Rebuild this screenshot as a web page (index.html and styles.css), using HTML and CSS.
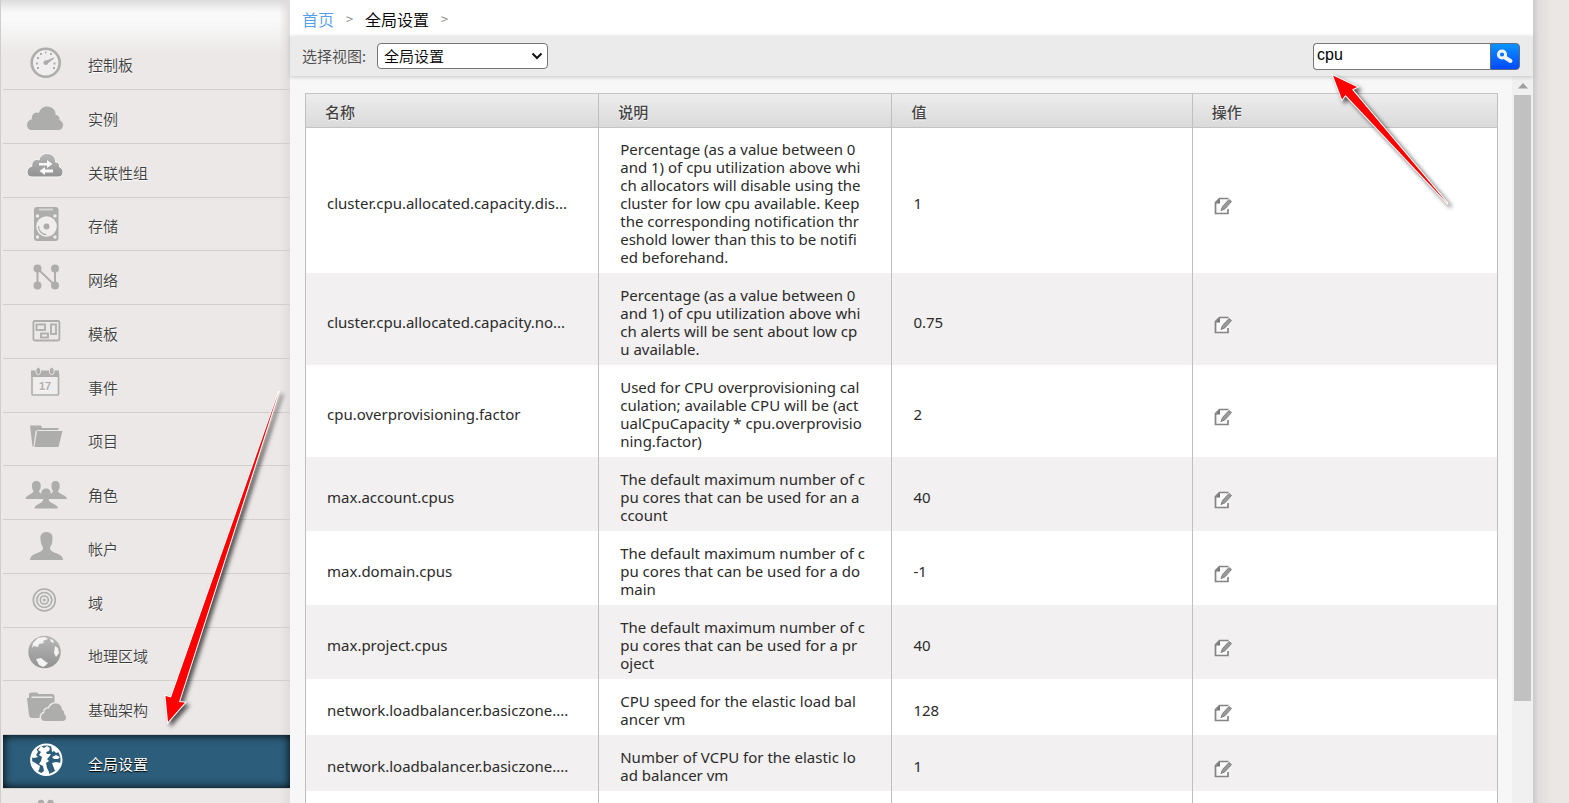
FILE: index.html
```html
<!DOCTYPE html>
<html lang="zh-CN">
<head>
<meta charset="utf-8">
<title>全局设置</title>
<link rel="stylesheet" href="styles.css">
</head>
<body>
<div class="app">
  <nav class="sidebar" aria-label="导航">
    <svg class="defs" width="0" height="0" aria-hidden="true">
      <defs>
        <linearGradient id="fade" x1="0" y1="0" x2="0" y2="1"><stop offset="0" stop-color="#b8b8b8"/><stop offset="1" stop-color="#929292"/></linearGradient>
        <path id="cloud" d="M7 40C4 40 2 38 2 35C2 32 4 30 7 29C6 25 10 21 14 23C15 19 18 16.500 22 16.500C27 16.500 31 20 30.500 25C33 25 35 27 34.500 30C37 31 38 33 38 35C38 38 36 40 33 40Z"/>
        <path id="person" d="M21.500 12C26 12 28 15 27.500 19C27.500 23 26 26 25 27.500C25 31 28 32 32 33.500C36 35 38 37 38 40H5C5 37 7 35 11 33.500C15 32 18 31 18 27.500C17 26 15.500 23 15.500 19C15 15 17 12 21.500 12Z"/>
      </defs>
    </svg>
    <ul class="menu">
      <li><a href="#"><svg class="icon" viewBox="0 0 44 53"><circle cx="20.700" cy="26.700" r="14" fill="#f0eeee" stroke="#adadac" stroke-width="2.600"/><path d="M11 27.500h2M12 22h2M15 18h2M20 16.500h1.500M25 18h2M28.500 27.500h2M12 32h2M28 32h2" fill="none" stroke="#adadac" stroke-width="2"/><circle cx="20.700" cy="26.700" r="2.300"/><path d="M20 25.500L29 22L21.500 28Z" stroke="#adadac"/></svg><span>控制板</span></a></li>
      <li><a href="#"><svg class="icon" viewBox="0 0 44 53"><use href="#cloud"/></svg><span>实例</span></a></li>
      <li><a href="#"><svg class="icon" viewBox="0 0 44 53"><g transform="translate(0 -7)"><use href="#cloud" fill="url(#fade)" stroke="#f8f8f8"/></g><path d="M14 19H22V16L27.500 20L22 24V21.500H14ZM28 25.500H20V23L14.500 27L20 31V28.500H28Z" fill="#fafafa"/></svg><span>关联性组</span></a></li>
      <li><a href="#"><svg class="icon" viewBox="0 0 44 53"><rect x="9" y="9" width="24.500" height="34" rx="3"/><path d="M14 11.500H28" stroke="#d6d5d4" stroke-width="2"/><circle cx="21.500" cy="28.500" r="10.300" fill="#f0eeed"/><circle cx="21.500" cy="28.500" r="3"/><path d="M13.500 28A8 8 0 0 0 21.500 36.500" fill="none" stroke="#adadac" stroke-width="1.200"/><g fill="#eeecec"><circle cx="12.500" cy="18" r="1.700"/><circle cx="30" cy="18" r="1.700"/><circle cx="12.500" cy="39" r="1.700"/><circle cx="30" cy="39" r="1.700"/></g></svg><span>存储</span></a></li>
      <li><a href="#"><svg class="icon" viewBox="0 0 44 53"><path d="M12.500 34.500V17.500L30 34.500V17.500" fill="none" stroke="#adadac" stroke-width="2"/><circle cx="12.500" cy="17.500" r="4"/><circle cx="30" cy="17.500" r="4"/><circle cx="12.500" cy="34.500" r="4"/><circle cx="30" cy="34.500" r="4"/></svg><span>网络</span></a></li>
      <li><a href="#"><svg class="icon" viewBox="0 0 44 53"><g fill="none" stroke="#adadac" stroke-width="1.800"><rect x="8.400" y="16" width="26" height="19.500" rx="1.500"/><rect x="11.500" y="19.500" width="8.500" height="5.500"/><rect x="26" y="19.500" width="5" height="9.500"/><rect x="16" y="28.500" width="7" height="4"/></g></svg><span>模板</span></a></li>
      <li><a href="#"><svg class="icon" viewBox="0 0 44 53"><rect x="7" y="14" width="26.500" height="22" rx="1" fill="#efeded" stroke="#adadac" stroke-width="1.600"/><path d="M6 11.500H34V18H6Z"/><g stroke="#ebe8e7"><rect x="11" y="8.500" width="4.500" height="7" rx="2.200"/><rect x="24.500" y="8.500" width="4.500" height="7" rx="2.200"/></g><text x="20" y="31" class="day">17</text></svg><span>事件</span></a></li>
      <li><a href="#"><svg class="icon" viewBox="0 0 44 53"><path d="M5 12.500H16L17 15H33.500V17H13L10.500 18L8.500 33.500H7.500Z"/><path d="M12 18H37.500L33.500 34H9.500Z"/></svg><span>项目</span></a></li>
      <li><a href="#"><svg class="icon" viewBox="0 0 44 53"><path d="M11.500 15c3 0 4.500 2 4.200 5c0 3-1 4-1.700 5c0 3 7 3.500 7 8H.5c0-4 8-5 8-8c-1-1-1.500-3-1.500-5c-.3-3 1.500-5 4.500-5ZM30.500 15c3 0 4.500 2 4.200 5c0 3-1 4-1.700 5c0 3 9 4 9 8H21c0-4 7-5 7-8c-1-1-1.500-3-1.500-5c-.3-3 1-5 4-5Z"/><path d="M21 22.500c3.500 0 5 2.500 4.700 5.500c0 3-1.200 4.500-2 5.500c0 4 9.300 4.500 9.300 9H9.500c0-4.500 8.800-5 8.800-9c-1-1-2-2.500-2-5.500c-.3-3 1.200-5.500 4.700-5.500Z"/></svg><span>角色</span></a></li>
      <li><a href="#"><svg class="icon" viewBox="0 0 44 53"><use href="#person"/></svg><span>帐户</span></a></li>
      <li><a href="#"><svg class="icon" viewBox="0 0 44 53"><g fill="none" stroke="#adadac" stroke-width="1.600"><circle cx="19.300" cy="26" r="11"/><circle cx="19.300" cy="26" r="7.500"/><circle cx="19.300" cy="26" r="4"/></g><circle cx="19.300" cy="26" r="1.500"/></svg><span>域</span></a></li>
      <li><a href="#"><svg class="icon" viewBox="0 0 44 53"><circle cx="19.500" cy="24" r="16.200" fill="url(#fade)"/><g fill="#f4f3f3"><path d="M8 15L13 10L20 9L23 11L18 13L19 15L14 16L13 19L9 18L7 20Z"/><path d="M11 31L16 30L21 34L23 35L20 38L18 39L14 37Z"/><path d="M30 18L33 20L34 25L31 29L29 25Z"/><path d="M25 11l3 1l1 3l-3-1z"/></g></svg><span>地理区域</span></a></li>
      <li><a href="#"><svg class="icon" viewBox="0 0 44 53"><path d="M2 17H4V13Q4 11.500 6 11.500H12Q13 11.500 13.500 13H27Q29.500 13 29.500 15V24L20 37H7Q4.500 37 4 34Z"/><path d="M6.500 15.500H27.500V17H6.500Z" fill="#ebe8e7"/><path d="M20 40C17.500 40 16 38.500 16 36.500C16 34 17.500 32.500 19.500 32C19 29 21.500 27 24 27.500C25 24.500 27.500 22.500 30.500 22.500C34.500 22.500 37 25 37 29C39 29.500 39.500 31 39 33C40.500 34 41 35 41 36.500C41 38.500 39.500 40 37.500 40Z" stroke="#ebe8e7" stroke-width="3" paint-order="stroke"/></svg><span>基础架构</span></a></li>
      <li><a href="#" class="active" aria-current="page"><svg class="icon" viewBox="0 0 44 53"><circle cx="21.300" cy="24.700" r="15.200" fill="none" stroke="#fff" stroke-width="2"/><path d="M16 11L19 13L22 11L25 13L24 16L21 17L22 19L26 19L24 22L22 24L24 26L21 28L22 33L24 37L24 40L15 39L19 36L18 31L14 29L16 26L17 22L14 20L16 17L13 15Z"/><path d="M7 19L11 13L13 17L11 20L13 22L9 23L6 22ZM26 10L30 12L34 17L31 18L29 16L27 17ZM27 22L31 20L35 22L33 24L29 24ZM7 26L12 29L15 31L14 35L12 37L8 33ZM27 28L31 27L36 28L33 34L30 36Z"/></svg><span>全局设置</span></a></li>
      <li><a href="#" aria-label="插件"><svg class="icon" viewBox="0 0 44 53"><circle cx="16" cy="14" r="3.200"/><circle cx="25.500" cy="14" r="3.200"/><rect x="14" y="15" width="13" height="16"/></svg></a></li>
    </ul>
  </nav>

  <main class="panel">
    <nav class="crumbs" aria-label="路径"><a href="#">首页</a><span class="sep">&gt;</span><span>全局设置</span><span class="sep">&gt;</span></nav>
    <form class="toolbar">
      <label for="view">选择视图:</label>
      <span class="picker"><select id="view"><option>全局设置</option></select><svg class="chevron" viewBox="0 0 12 8"><path d="M1.500 1.500L6 6L10.500 1.500"/></svg></span>
      <span class="search"><input type="text" value="cpu" aria-label="搜索"><button type="button" aria-label="搜索"><svg viewBox="0 0 18 16"><circle cx="6" cy="5.500" r="3.600"/><path d="M9 8.500L14.500 12" class="grip"/></svg></button></span>
    </form>
    <div class="content">
      <div class="list">
        <table>
          <colgroup><col class="c-name"><col class="c-desc"><col class="c-value"><col></colgroup>
          <thead><tr><th>名称</th><th>说明</th><th>值</th><th>操作</th></tr></thead>
          <tbody>
            <tr><td>cluster.cpu.allocated.capacity.dis...</td><td>Percentage (as a value between 0<br>and 1) of cpu utilization above whi<br>ch allocators will disable using the<br>cluster for low cpu available. Keep<br>the corresponding notification thr<br>eshold lower than this to be notifi<br>ed beforehand.</td><td>1</td><td class="act"><button type="button" aria-label="编辑"><svg viewBox="0 0 18 18"><use href="#edit"/></svg></button></td></tr>
            <tr><td>cluster.cpu.allocated.capacity.no...</td><td>Percentage (as a value between 0<br>and 1) of cpu utilization above whi<br>ch alerts will be sent about low cp<br>u available.</td><td>0.75</td><td class="act"><button type="button" aria-label="编辑"><svg viewBox="0 0 18 18"><use href="#edit"/></svg></button></td></tr>
            <tr><td>cpu.overprovisioning.factor</td><td>Used for CPU overprovisioning cal<br>culation; available CPU will be (act<br>ualCpuCapacity * cpu.overprovisio<br>ning.factor)</td><td>2</td><td class="act"><button type="button" aria-label="编辑"><svg viewBox="0 0 18 18"><use href="#edit"/></svg></button></td></tr>
            <tr><td>max.account.cpus</td><td>The default maximum number of c<br>pu cores that can be used for an a<br>ccount</td><td>40</td><td class="act"><button type="button" aria-label="编辑"><svg viewBox="0 0 18 18"><use href="#edit"/></svg></button></td></tr>
            <tr><td>max.domain.cpus</td><td>The default maximum number of c<br>pu cores that can be used for a do<br>main</td><td>-1</td><td class="act"><button type="button" aria-label="编辑"><svg viewBox="0 0 18 18"><use href="#edit"/></svg></button></td></tr>
            <tr><td>max.project.cpus</td><td>The default maximum number of c<br>pu cores that can be used for a pr<br>oject</td><td>40</td><td class="act"><button type="button" aria-label="编辑"><svg viewBox="0 0 18 18"><use href="#edit"/></svg></button></td></tr>
            <tr><td>network.loadbalancer.basiczone....</td><td>CPU speed for the elastic load bal<br>ancer vm</td><td>128</td><td class="act"><button type="button" aria-label="编辑"><svg viewBox="0 0 18 18"><use href="#edit"/></svg></button></td></tr>
            <tr><td>network.loadbalancer.basiczone....</td><td>Number of VCPU for the elastic lo<br>ad balancer vm</td><td>1</td><td class="act"><button type="button" aria-label="编辑"><svg viewBox="0 0 18 18"><use href="#edit"/></svg></button></td></tr>
            <tr class="next"><td></td><td></td><td></td><td></td></tr>
          </tbody>
        </table>
      </div>
      <div class="rail" aria-hidden="true"><svg viewBox="0 0 10 6"><path d="M0 5.500L5 0L10 5.500Z"/></svg><div class="thumb"></div></div>
    </div>
  </main>
  <div class="margin"></div>

  <svg class="defs" width="0" height="0" aria-hidden="true">
    <defs>
      <g id="edit">
        <path d="M14 12V16.500H1.500V5.500L5.500 1.500H14.500" fill="#fbfbfb" stroke="#858585" stroke-width="1.700"/>
        <path d="M1.500 6.500H6V1.500Z" fill="#777"/>
        <path d="M7 13.500L8.500 9.500L15 2.500L17.500 4.500L11 11.800Z" fill="#999" stroke="#808080"/>
      </g>
    </defs>
  </svg>
  <svg class="notes" width="1569" height="803" viewBox="0 0 1569 803" aria-hidden="true">
    <path d="M168 722L165.500 696L171 697.500L279 391L179 702L185 702.500Z"/>
    <path d="M1333 75.500L1357 87L1352 89.500L1448 204L1345.500 95L1342 99.500Z"/>
  </svg>
</div>
</body>
</html>
```

FILE: styles.css
```css
* { box-sizing: border-box; }

body {
  margin: 0;
  font: 15px/18px "Noto Sans", "Noto Sans CJK SC", sans-serif;
  color: #2b2b2b;
  background: #ebe8e6;
}

.app {
  position: relative;
  display: flex;
  height: 100vh;
  overflow: hidden;
}

.defs { position: absolute; }

/* Sidebar */
.sidebar {
  flex: none;
  width: 290px;
  padding: 36px 0 0 2px;
  border-left: 1px solid #cfcdcf;
  background:
    linear-gradient(to right, transparent 278px, #dfdcdb),
    linear-gradient(#dcdcdc, #f8f8f9 12px, #fafafa 20px, #ebe8e7 54px, #ebe8e7);
}

.menu {
  margin: 0;
  padding: 0;
  list-style: none;
}

.menu li {
  height: 54px;
  border-bottom: 1px solid #cfcfcf;
}

.menu li:nth-child(4n) { height: 53px; }

.menu a {
  display: flex;
  align-items: center;
  gap: 19px;
  height: 100%;
  padding-left: 22px;
  font-family: "Noto Sans CJK SC", sans-serif;
  font-weight: 350;
  color: #3f3f3f;
  text-decoration: none;
  text-shadow: 0 1px 1px #fff;
}

.menu span { padding-top: 4px; }

.menu .active {
  background: #2c5d7b;
  box-shadow: inset 0 0 10px #000;
  color: #fff;
  font-weight: 400;
  text-shadow: 0 1px 1px #000;
}

.icon {
  flex: none;
  width: 44px;
  height: 53px;
  fill: #adadac;
}

.active .icon { fill: #fff; }

.day {
  font: bold 11px "Liberation Sans", sans-serif;
  text-anchor: middle;
}

/* Main panel */
.panel {
  flex: 1;
  min-width: 0;
  display: flex;
  flex-direction: column;
  background: #f7f7f7;
}

.margin {
  flex: none;
  width: 36px;
  background: linear-gradient(to right, #cccacb, #e0dddc 6px, #ebe7e5 20px);
}

.crumbs {
  display: flex;
  align-items: center;
  height: 36px;
  padding: 1px 12px 0;
  background: #fff;
  font: 350 16px/20px "Noto Sans CJK SC", sans-serif;
  color: #000;
}

.crumbs a {
  color: #559fee;
  text-decoration: none;
}

.sep {
  width: 31px;
  font-size: 13px;
  text-align: center;
  color: #888;
}

.toolbar {
  position: relative;
  display: flex;
  align-items: center;
  height: 40px;
  padding: 0 13px 0 12px;
  background: #ebebeb;
  box-shadow: 0 1px 4px #c4c4c4;
  font-family: "Noto Sans CJK SC", sans-serif;
  font-weight: 350;
}

.toolbar label { color: #4a4a4a; }

.picker {
  display: grid;
  align-items: center;
  margin-left: 11px;
}

.picker select {
  grid-area: 1 / 1;
  width: 171px;
  height: 26px;
  padding: 0 6px 1px;
  border: 1px solid #767676;
  border-radius: 4px;
  background: #fff;
  color: #000;
  font: 350 15px "Noto Sans CJK SC", sans-serif;
  appearance: none;
}

.chevron {
  grid-area: 1 / 1;
  justify-self: end;
  width: 12px;
  height: 8px;
  margin-right: 5px;
  fill: none;
  stroke: #111;
  stroke-width: 2;
  pointer-events: none;
}

.search {
  display: flex;
  height: 27px;
  margin-left: auto;
}

.search input {
  width: 177px;
  padding: 0 3px 2px;
  border: 1px solid #777;
  border-right: 0;
  border-radius: 4px 0 0 4px;
  background: #fff;
  color: #000;
  font: 16px "Liberation Sans", sans-serif;
}

.search button {
  width: 30px;
  padding: 2px 0 0;
  border: 1px solid #5a6d8c;
  border-radius: 0 4px 4px 0;
  background: linear-gradient(#0a94ff, #0349ff);
}

.search svg {
  display: block;
  width: 18px;
  height: 16px;
  margin: auto;
  fill: none;
  stroke: #f0f3f8;
  stroke-width: 3;
}

.search .grip {
  stroke-width: 4;
  stroke-linecap: round;
}

.content {
  flex: 1;
  min-height: 0;
  display: flex;
  overflow: hidden;
}

.list {
  flex: 1;
  padding: 17px 14px 0 15px;
}

/* Settings table */
table {
  width: 100%;
  table-layout: fixed;
  border-collapse: separate;
  border-spacing: 0;
  border-left: 1px solid #bfbfbf;
}

.c-name, .c-desc { width: 24.6%; }
.c-value { width: 25.2%; }

th, td {
  border-right: 1px solid #bfbfbf;
  text-align: left;
  white-space: nowrap;
}

th {
  height: 35px;
  padding: 3px 19px 0;
  border-top: 1px solid #c4c4c4;
  border-bottom: 1px solid #c4c4c4;
  background: linear-gradient(#ededed, #dadada);
  font: 500 15px/18px "Noto Sans CJK SC", sans-serif;
  color: #444;
  text-shadow: 0 1px 1px #fff;
}

td {
  padding: 13px 21px 7px;
  background: #fff;
}

tr:nth-child(even) td { background: #f2f0f0; }

tr:first-child td { padding-top: 12px; }

.next td { height: 56px; }

tr td.act { padding: 18px 21px 7px; }

.act button {
  display: block;
  padding: 0;
  border: 0;
  background: none;
}

.act svg {
  display: block;
  width: 18px;
  height: 18px;
}

/* Scroll rail */
.rail {
  flex: none;
  width: 21px;
  padding: 7px 2px 0;
  background: #f0f0f0;
}

.rail svg {
  display: block;
  width: 10px;
  height: 6px;
  margin: 0 auto 6px;
  fill: #a0a0a0;
}

.thumb {
  height: 606px;
  background: #c1c1c1;
}

/* Pointer arrows laid over the page */
.notes {
  position: absolute;
  top: 0;
  left: 0;
  pointer-events: none;
  fill: red;
  stroke: #fff;
  stroke-width: 2;
  paint-order: stroke;
  filter: drop-shadow(3px 3px 2px rgba(0, 0, 0, .65));
}
```
